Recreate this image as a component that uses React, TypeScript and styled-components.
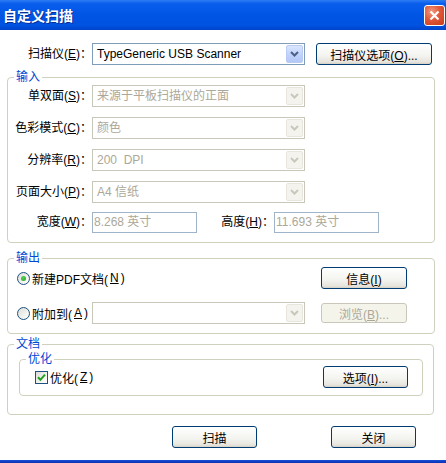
import React from 'react';
import styled, { createGlobalStyle } from 'styled-components';

const GlobalStyle = createGlobalStyle`
  html, body {
    margin: 0;
    padding: 0;
    background: #fff;
  }
  body {
    font-family: "Liberation Sans", "Noto Sans CJK SC", sans-serif;
    font-size: 12px;
    color: #000;
  }
`;

const Chevron = ({ color }: { color: string }) => (
  <svg width="9" height="6" viewBox="0 0 9 6">
    <path d="M1 1 L4.5 4.5 L8 1" fill="none" stroke={color} strokeWidth="2" />
  </svg>
);

const Combo = ({ value, width, disabled }: { value: string; width: number; disabled?: boolean }) => (
  <ComboBox $width={width} $disabled={disabled}>
    <ComboText>{value}</ComboText>
    <DropButton $disabled={disabled}>
      <Chevron color={disabled ? '#C9C7BA' : '#4D6185'} />
    </DropButton>
  </ComboBox>
);

export default function App() {
  return (
    <>
      <GlobalStyle />
      <Window>
        <TitleBar>
          <Title>自定义扫描</Title>
          <CloseButton>
            <svg width="11" height="11" viewBox="0 0 11 11">
              <path d="M1.5 1.5 L9.5 9.5 M9.5 1.5 L1.5 9.5" stroke="#fff" strokeWidth="2.2" />
            </svg>
          </CloseButton>
        </TitleBar>

        <Body>
          <ScannerRow>
            <Label>
              扫描仪(<u>E</u>)：
            </Label>
            <Combo value="TypeGeneric USB Scanner" width={213} />
            <Button $width={116}>
              扫描仪选项(<u>O</u>)...
            </Button>
          </ScannerRow>

          <GroupBox $mt={5} $pb={9}>
            <Legend>输入</Legend>
            <FormGrid>
              <Label>
                单双面(<u>S</u>)：
              </Label>
              <Combo value="来源于平板扫描仪的正面" width={213} disabled />
              <Label>
                色彩模式(<u>C</u>)：
              </Label>
              <Combo value="颜色" width={213} disabled />
              <Label>
                分辨率(<u>R</u>)：
              </Label>
              <Combo value="200  DPI" width={213} disabled />
              <Label>
                页面大小(<u>P</u>)：
              </Label>
              <Combo value="A4 信纸" width={213} disabled />
            </FormGrid>
            <SizeRow>
              <Label>
                宽度(<u>W</u>)：
              </Label>
              <TextBox>8.268 英寸</TextBox>
              <Label>
                高度(<u>H</u>)：
              </Label>
              <TextBox>11.693 英寸</TextBox>
            </SizeRow>
          </GroupBox>

          <GroupBox $mt={8} $pb={9}>
            <Legend>输出</Legend>
            <OutputGrid>
              <Choice $span>
                <Radio $checked />
                新建PDF文档(<u>N</u>)
              </Choice>
              <Button $width={86}>
                信息(<u>I</u>)
              </Button>
              <Choice>
                <Radio />
                附加到(<u>A</u>)
              </Choice>
              <Combo value="" width={213} disabled />
              <Button $width={86} $height={20} disabled>
                浏览(<u>B</u>)...
              </Button>
            </OutputGrid>
          </GroupBox>

          <GroupBox $mt={3} $pb={18} $mr={1}>
            <Legend>文档</Legend>
            <InnerGroup>
              <Legend>优化</Legend>
              <OptimizeRow>
                <Choice>
                  <CheckBox>
                    <svg width="9" height="9" viewBox="0 0 9 9">
                      <path d="M1 4.2 L3.4 6.8 L8 1.6" fill="none" stroke="#21A121" strokeWidth="2" />
                    </svg>
                  </CheckBox>
                  优化(<u>Z</u>)
                </Choice>
                <Button $width={85}>
                  选项(<u>I</u>)...
                </Button>
              </OptimizeRow>
            </InnerGroup>
          </GroupBox>

          <ActionRow>
            <Button $width={85}>扫描</Button>
            <Button $width={85}>关闭</Button>
          </ActionRow>
        </Body>
        <BottomEdge />
      </Window>
    </>
  );
}

const Window = styled.div`
  width: 446px;
  height: 463px;
  display: flex;
  flex-direction: column;
  background: #fff;
  overflow: hidden;
`;

const TitleBar = styled.div`
  height: 30px;
  flex: none;
  display: flex;
  align-items: center;
  justify-content: space-between;
  padding: 0 1px 0 3px;
  background: linear-gradient(
    180deg,
    #2d7cf5 0%,
    #0a5eec 12%,
    #0055e5 50%,
    #0052e0 85%,
    #0043c8 100%
  );
`;

const Title = styled.span`
  color: #fff;
  font-size: 14px;
  font-weight: bold;
  text-shadow: 1px 1px 0 #0a2f97;
`;

const CloseButton = styled.div`
  width: 21px;
  height: 21px;
  box-sizing: border-box;
  border: 1px solid #fff;
  border-radius: 3px;
  display: flex;
  align-items: center;
  justify-content: center;
  background: radial-gradient(circle at 35% 30%, #f09a80 0%, #e2583a 45%, #c63a16 100%);
`;

const Body = styled.div`
  flex: 1;
  display: flex;
  flex-direction: column;
  padding: 13px 11px 0 7px;
`;

const BottomEdge = styled.div`
  height: 3px;
  flex: none;
  background: linear-gradient(180deg, #1650d6, #0a2fb0);
`;

const Label = styled.span`
  display: block;
  text-align: right;
  white-space: nowrap;
  line-height: 22px;
`;

const ScannerRow = styled.div`
  display: grid;
  grid-template-columns: 84px 224px 116px;
  align-items: center;
  padding-left: 1px;
`;

const GroupBox = styled.fieldset<{ $mt: number; $pb: number; $mr?: number }>`
  margin: ${(p) => p.$mt}px ${(p) => p.$mr ?? 0}px 0 0;
  padding: 1px 0 ${(p) => p.$pb}px 0;
  border: 1px solid #d0d0bf;
  border-radius: 4px;
  min-width: 0;
`;

const InnerGroup = styled.fieldset`
  margin: 0 10px 0 11px;
  padding: 0 0 7px 0;
  border: 1px solid #d0d0bf;
  border-radius: 4px;
  min-width: 0;
`;

const Legend = styled.legend`
  margin-left: 6px;
  padding: 0 2px;
  color: #0046d5;
  font-size: 12px;
  line-height: 14px;
`;

const FormGrid = styled.div`
  display: grid;
  grid-template-columns: 84px 213px;
  row-gap: 10px;
  align-items: center;
`;

const SizeRow = styled.div`
  display: grid;
  grid-template-columns: 84px 105px 77px 105px;
  align-items: center;
  margin-top: 8px;
`;

const ComboBox = styled.div<{ $width: number; $disabled?: boolean }>`
  width: ${(p) => p.$width}px;
  height: 22px;
  box-sizing: border-box;
  padding: 1px;
  display: flex;
  align-items: stretch;
  border: 1px solid ${(p) => (p.$disabled ? '#c9c7ba' : '#7f9db9')};
  background: #fff;
  color: ${(p) => (p.$disabled ? '#aca899' : '#000')};
`;

const ComboText = styled.span`
  flex: 1;
  padding-left: 3px;
  line-height: 18px;
  white-space: pre;
  overflow: hidden;
`;

const DropButton = styled.span<{ $disabled?: boolean }>`
  width: 17px;
  box-sizing: border-box;
  display: flex;
  align-items: center;
  justify-content: center;
  border-radius: 2px;
  border: 1px solid ${(p) => (p.$disabled ? '#e8e6dc' : '#b9cbf3')};
  background: ${(p) =>
    p.$disabled
      ? '#f4f3ee'
      : 'linear-gradient(180deg, #dbe6fe 0%, #c2d3fc 50%, #b4c8f6 100%)'};
`;

const TextBox = styled.div`
  width: 105px;
  height: 21px;
  box-sizing: border-box;
  border: 1px solid #9fb4c9;
  color: #aca899;
  padding-left: 1px;
  line-height: 19px;
  white-space: nowrap;
`;

const Button = styled.button<{ $width: number; $height?: number }>`
  width: ${(p) => p.$width}px;
  height: ${(p) => p.$height ?? 22}px;
  box-sizing: border-box;
  padding: 0;
  border: 1px solid #003c74;
  border-radius: 3px;
  background: linear-gradient(180deg, #ffffff 0%, #f3f3ef 60%, #e6e4dc 90%, #d6d0c5 100%);
  font-family: inherit;
  font-size: 12px;
  color: #000;
  white-space: nowrap;

  &:disabled {
    border-color: #c9c7ba;
    color: #aca899;
    background: #f5f4ea;
  }
`;

const OutputGrid = styled.div`
  display: grid;
  grid-template-columns: 75px 229px 86px;
  row-gap: 13px;
  align-items: center;
  padding: 1px 0 0 9px;
  & > button {
    grid-column: 3;
  }
`;

const Choice = styled.label<{ $span?: boolean }>`
  display: flex;
  align-items: center;
  gap: 2px;
  white-space: nowrap;
  ${(p) => (p.$span ? 'grid-column: 1 / 3;' : '')}
`;

const Radio = styled.span<{ $checked?: boolean }>`
  width: 13px;
  height: 13px;
  box-sizing: border-box;
  border-radius: 50%;
  border: 1px solid #1c5180;
  background: linear-gradient(135deg, #dcdcd7 0%, #f6f6f3 70%, #fff 100%);
  display: flex;
  align-items: center;
  justify-content: center;
  &::after {
    content: '';
    width: 5px;
    height: 5px;
    border-radius: 50%;
    background: ${(p) => (p.$checked ? 'radial-gradient(circle at 40% 35%, #55d055, #21a121)' : 'transparent')};
  }
`;

const CheckBox = styled.span`
  width: 13px;
  height: 13px;
  box-sizing: border-box;
  border: 1px solid #1c5180;
  background: linear-gradient(135deg, #dcdcd7 0%, #f6f6f3 70%, #fff 100%);
  display: flex;
  align-items: center;
  justify-content: center;
`;

const OptimizeRow = styled.div`
  display: flex;
  align-items: center;
  justify-content: space-between;
  padding: 0 14px 0 15px;
`;

const ActionRow = styled.div`
  display: flex;
  justify-content: flex-end;
  gap: 74px;
  margin-top: 11px;
  padding-right: 19px;
`;
